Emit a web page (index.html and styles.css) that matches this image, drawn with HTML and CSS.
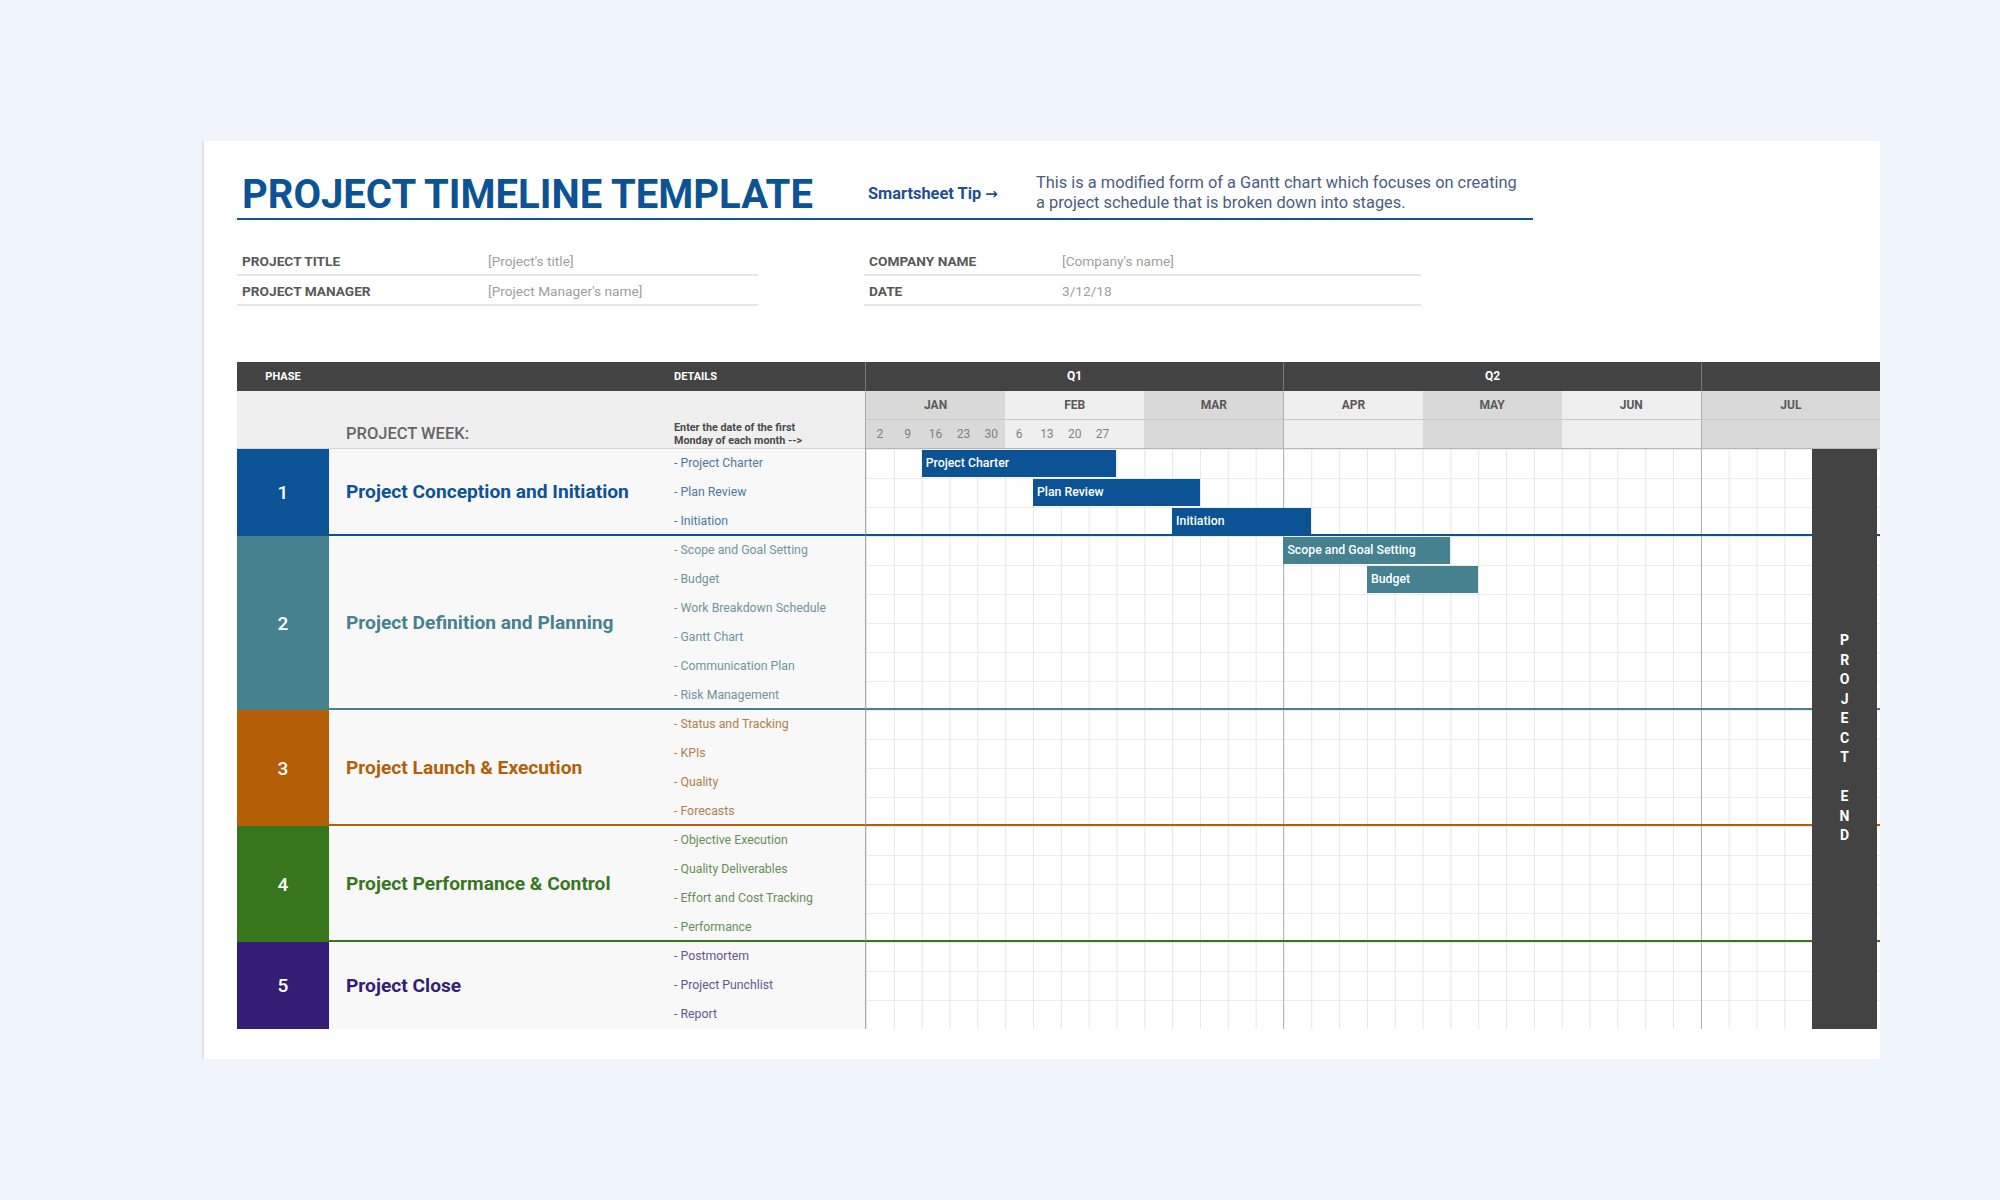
FILE: index.html
```html
<!DOCTYPE html>
<html lang="en">
<head>
<meta charset="utf-8">
<title>Project Timeline Template</title>
<link rel="stylesheet" href="styles.css">
</head>
<body>
<div class="card">
  <div class="title-row">
    <h1 class="title">PROJECT TIMELINE TEMPLATE</h1>
    <div class="tip">Smartsheet Tip <span class="arrow">→</span></div>
    <p class="desc">This is a modified form of a Gantt chart which focuses on creating<br>a project schedule that is broken down into stages.</p>
  </div>

  <div class="info">
    <div class="info-block left">
      <div class="info-row"><span class="lbl">PROJECT TITLE</span><span class="val">[Project's title]</span></div>
      <div class="info-row"><span class="lbl">PROJECT MANAGER</span><span class="val">[Project Manager's name]</span></div>
    </div>
    <div class="info-block right">
      <div class="info-row"><span class="lbl">COMPANY NAME</span><span class="val">[Company's name]</span></div>
      <div class="info-row"><span class="lbl">DATE</span><span class="val">3/12/18</span></div>
    </div>
  </div>

  <div class="table">
    <div class="thead">
      <div class="left-cols">
        <div class="c-phase th-phase">PHASE</div>
        <div class="c-name"></div>
        <div class="c-details">DETAILS</div>
      </div>
      <div class="th-gantt">
        <div class="q">Q1</div>
        <div class="q q-sep">Q2</div>
        <div class="q q-sep"></div>
      </div>
    </div>

    <div class="subhead">
      <div class="left-cols">
        <div class="c-phase"></div>
        <div class="c-name sub-name">PROJECT WEEK:</div>
        <div class="c-details sub-details">Enter the date of the first<br>Monday of each month --&gt;</div>
      </div>
      <div class="sub-gantt">
        <div class="month dark">JAN</div>
        <div class="month light">FEB</div>
        <div class="month dark">MAR</div>
        <div class="month light q-start">APR</div>
        <div class="month dark">MAY</div>
        <div class="month light">JUN</div>
        <div class="month dark q-start">JUL</div>
        <div class="weeks dark"><span>2</span><span>9</span><span>16</span><span>23</span><span>30</span></div>
        <div class="weeks light"><span>6</span><span>13</span><span>20</span><span>27</span><span></span></div>
        <div class="weeks dark"></div>
        <div class="weeks light q-start"></div>
        <div class="weeks dark"></div>
        <div class="weeks light"></div>
        <div class="weeks dark q-start"></div>
      </div>
    </div>

    <div class="tbody">
      <div class="phase p1 r3">
        <div class="c-phase num">1</div>
        <div class="c-name name">Project Conception and Initiation</div>
        <div class="c-details details"><span>- Project Charter</span><span>- Plan Review</span><span>- Initiation</span></div>
        <div class="g">
          <div class="bar" style="grid-row:1; grid-column:3 / span 7">Project Charter</div>
          <div class="bar" style="grid-row:2; grid-column:7 / span 6">Plan Review</div>
          <div class="bar" style="grid-row:3; grid-column:12 / span 5">Initiation</div>
        </div>
      </div>

      <div class="phase p2 r6">
        <div class="c-phase num">2</div>
        <div class="c-name name">Project Definition and Planning</div>
        <div class="c-details details"><span>- Scope and Goal Setting</span><span>- Budget</span><span>- Work Breakdown Schedule</span><span>- Gantt Chart</span><span>- Communication Plan</span><span>- Risk Management</span></div>
        <div class="g">
          <div class="bar" style="grid-row:1; grid-column:16 / span 6">Scope and Goal Setting</div>
          <div class="bar" style="grid-row:2; grid-column:19 / span 4">Budget</div>
        </div>
      </div>

      <div class="phase p3 r4">
        <div class="c-phase num">3</div>
        <div class="c-name name">Project Launch &amp; Execution</div>
        <div class="c-details details"><span>- Status and Tracking</span><span>- KPIs</span><span>- Quality</span><span>- Forecasts</span></div>
        <div class="g"></div>
      </div>

      <div class="phase p4 r4">
        <div class="c-phase num">4</div>
        <div class="c-name name">Project Performance &amp; Control</div>
        <div class="c-details details"><span>- Objective Execution</span><span>- Quality Deliverables</span><span>- Effort and Cost Tracking</span><span>- Performance</span></div>
        <div class="g"></div>
      </div>

      <div class="phase p5 r3">
        <div class="c-phase num">5</div>
        <div class="c-name name">Project Close</div>
        <div class="c-details details"><span>- Postmortem</span><span>- Project Punchlist</span><span>- Report</span></div>
        <div class="g"></div>
      </div>

      <div class="project-end">PROJECT END</div>
    </div>
  </div>
</div>
</body>
</html>
```

FILE: styles.css
```css
* { box-sizing: border-box; }

html, body {
  margin: 0;
  padding: 0;
}

body {
  background: #eff4fd;
  font-family: Roboto, "Liberation Sans", Arial, sans-serif;
  width: 2000px;
  height: 1200px;
  overflow: hidden;
}

.card {
  margin: 141px 0 0 202px;
  width: 1678px;
  background: #ffffff;
  border-left: 2px solid #e2e2e2;
  padding: 30px 0 30px 33px;
}

/* ---------- title ---------- */
.title-row {
  display: flex;
  align-items: flex-start;
  width: 1296px;
  border-bottom: 2px solid #0b5394;
}

.title {
  margin: 0;
  width: 631px;
  padding-left: 5px;
  font-size: 40px;
  line-height: 47px;
  font-weight: 700;
  color: #0b5394;
  white-space: nowrap;
}

.tip {
  width: 168px;
  margin-top: 13px;
  font-size: 16.4px;
  line-height: 19px;
  font-weight: 700;
  color: #1f4f8f;
  white-space: nowrap;
}

.arrow {
  font-family: "DejaVu Sans", sans-serif;
  font-size: 15px;
  font-weight: 700;
}

.desc {
  margin: 2px 0 0 0;
  font-size: 16.4px;
  line-height: 19.5px;
  color: #4c5d7d;
  white-space: nowrap;
}

/* ---------- info ---------- */
.info {
  display: flex;
  gap: 106px;
  margin-top: 26px;
}

.info-block.left { width: 521px; }
.info-block.right { width: 557px; }

.info-row {
  display: flex;
  align-items: center;
  height: 30px;
  padding-top: 1px;
  border-bottom: 2px solid #e6e6e6;
  font-size: 13.7px;
}

.lbl {
  padding-left: 5px;
  font-weight: 700;
  color: #595959;
}

.left .lbl { width: 251px; }
.right .lbl { width: 198px; }

.val {
  color: #9e9e9e;
}

/* ---------- table ---------- */
.table {
  margin-top: 56px;
  width: 1643px;
}

.left-cols {
  display: flex;
  width: 628px;
  flex: none;
}

.c-phase { width: 92px; flex: none; }
.c-name { width: 345px; flex: none; }
.c-details { width: 191px; flex: none; }

.thead {
  display: flex;
  height: 29px;
  background: #434343;
  color: #ffffff;
  font-size: 11px;
  font-weight: 700;
  line-height: 29px;
}

.th-phase { text-align: center; }

.th-gantt {
  flex: 1;
  display: grid;
  grid-template-columns: 417px 418px 1fr;
  border-left: 1px solid #7a7a7a;
}

.q {
  text-align: center;
  font-size: 12px;
}

.q-sep { border-left: 1px solid #7a7a7a; }

/* sub header */
.subhead {
  display: flex;
  height: 58px;
}

.subhead .left-cols {
  background: #efefef;
  border-bottom: 1px solid #d6d6d6;
}

.sub-name {
  align-self: flex-end;
  padding-left: 17px;
  margin-bottom: 5px;
  font-size: 16.5px;
  line-height: 19px;
  font-weight: 500;
  color: #666666;
}

.sub-details {
  align-self: flex-end;
  margin-bottom: 1px;
  font-size: 10.8px;
  line-height: 13px;
  font-weight: 700;
  color: #4a4a4a;
}

.sub-gantt {
  flex: 1;
  display: grid;
  grid-template-columns: repeat(34, 27.83px) 1fr;
  grid-template-rows: 29px 29px;
  border-left: 1px solid #aaaaaa;
}

.month {
  grid-column: span 5;
  text-align: center;
  line-height: 28px;
  font-size: 12px;
  font-weight: 700;
  color: #595959;
  border-bottom: 1px solid #c9c9c9;
}

.weeks {
  grid-column: span 5;
  display: grid;
  grid-template-columns: repeat(5, 27.83px);
  align-items: center;
  border-bottom: 1px solid #b8b8b8;
  font-size: 12px;
  color: #7f7f7f;
}

.weeks span { text-align: center; }

.dark { background: #d9d9d9; }
.light { background: #efefef; }
.q-start { border-left: 1px solid #b0b0b0; }

/* body */
.tbody {
  position: relative;
}

.phase {
  display: flex;
}

.p1 { --c: #0b5394; }
.p2 { --c: #45818e; }
.p3 { --c: #b45f06; }
.p4 { --c: #38761d; }
.p5 { --c: #351c75; }

.r3 { height: 87px; }
.r4 { height: 116px; }
.r6 { height: 174px; }

.num {
  background: var(--c);
  color: #ffffff;
  font-size: 19px;
  font-weight: 500;
  display: flex;
  align-items: center;
  justify-content: center;
}

.name {
  display: flex;
  align-items: center;
  padding-left: 17px;
  background: #f8f8f8;
  color: var(--c);
  font-size: 19.2px;
  font-weight: 700;
  border-bottom: 2px solid var(--c);
}

.details {
  display: flex;
  flex-direction: column;
  background: #f8f8f8;
  border-bottom: 2px solid var(--c);
  font-size: 12.3px;
  color: color-mix(in srgb, var(--c) 60%, #b0b0b0);
}

.details span {
  flex: none;
  height: 29px;
  line-height: 29px;
  white-space: nowrap;
}

.g {
  flex: 1;
  display: grid;
  grid-template-columns: repeat(34, 27.83px) 1fr;
  grid-auto-rows: 29px;
  border-left: 1px solid #aaaaaa;
  border-bottom: 2px solid var(--c);
  background-color: #ffffff;
  background-image:
    linear-gradient(to right, transparent 417px, #b4b4b4 417px, #b4b4b4 418px, transparent 418px, transparent 835px, #b4b4b4 835px, #b4b4b4 836px, transparent 836px),
    linear-gradient(to right, #e6e6e6 1px, transparent 1px),
    linear-gradient(to bottom, #ececec 1px, transparent 1px);
  background-size: 100% 100%, 27.83px 100%, 100% 29px;
  background-repeat: no-repeat, repeat-x, repeat-y;
}

.p5 .name, .p5 .details, .p5 .g { border-bottom: none; }

.bar {
  margin-top: 1px;
  height: 27px;
  background: var(--c);
  color: #ffffff;
  font-size: 12.3px;
  font-weight: 500;
  line-height: 27px;
  padding-left: 4px;
  white-space: nowrap;
  overflow: hidden;
}

.project-end {
  position: absolute;
  top: 0;
  bottom: 0;
  left: 1575px;
  width: 65px;
  background: #434343;
  color: #ffffff;
  display: flex;
  align-items: center;
  justify-content: center;
  writing-mode: vertical-rl;
  text-orientation: upright;
  font-size: 14px;
  font-weight: 700;
  letter-spacing: 3.5px;
  word-spacing: 0;
}
```
